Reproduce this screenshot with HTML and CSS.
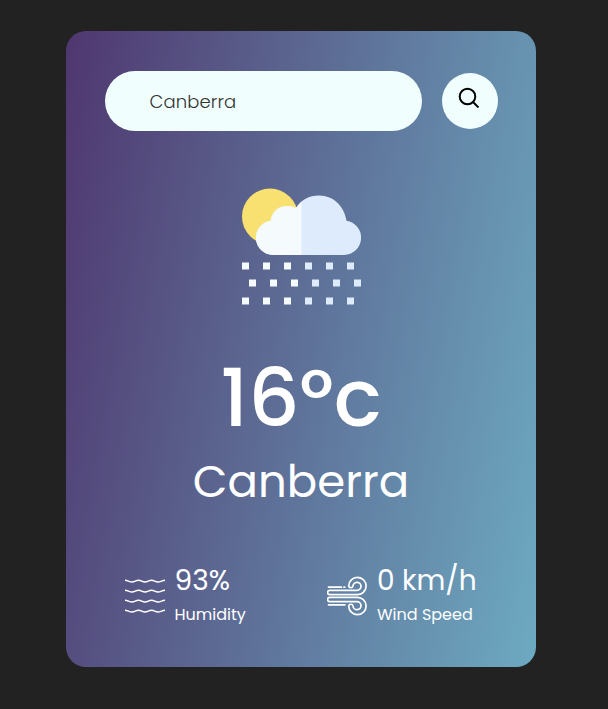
FILE: index.html
```html
<!DOCTYPE html>
<html lang="en">
<head>
<meta charset="utf-8">
<title>Weather</title>
<link rel="stylesheet" href="styles.css">
</head>
<body>
<main class="card">
  <form class="search">
    <div class="field"><span class="query">Canberra</span></div>
    <button class="go" type="button" aria-label="Search">
      <svg width="22" height="22" viewBox="0 0 22 22" fill="none" stroke="#000" stroke-width="2"><circle cx="9.500" cy="9.500" r="7.800"/><path d="M15 15l5.500 5.500"/></svg>
    </button>
  </form>
  <svg class="picture" width="120" height="120" viewBox="0 0 120 120">
    <circle cx="29" cy="29.500" r="28" fill="#f9e171"/>
    <path d="M32 68A17.200 17.200 0 0 1 29.500 33.800C31.500 23 39 19 46.500 19Q51 19 55 21C60 13 68 8.500 78 8.500C93 8.500 103.500 20 105.500 33.800A17.200 17.200 0 0 1 103 68Z" fill="#deebfd"/>
    <path d="M32 68A17.200 17.200 0 0 1 29.500 33.800C31.500 23 39 19 46.500 19Q51 19 55 21Q57.500 17.500 60.500 14.500V68Z" fill="#f5fafd"/>
    <path fill="#f5fafd" d="M1 75.500h7v7h-7zM22 75.500h7v7h-7zM43 75.500h7v7h-7zM8 92.500h7v7h-7zM29 92.500h7v7h-7zM50 92.500h7v7h-7zM1 110.500h7v7h-7zM22 110.500h7v7h-7zM43 110.500h7v7h-7z"/>
    <path fill="#deebfd" d="M64 75.500h7v7h-7zM85 75.500h7v7h-7zM106 75.500h7v7h-7zM71 92.500h7v7h-7zM92 92.500h7v7h-7zM113 92.500h7v7h-7zM64 110.500h7v7h-7zM85 110.500h7v7h-7zM106 110.500h7v7h-7z"/>
  </svg>
  <h1 class="temp">16°c</h1>
  <h2 class="city">Canberra</h2>
  <div class="details">
    <div class="detail">
      <svg class="icon" width="40" height="40" viewBox="0 0 40 40" fill="none" stroke="#fff" stroke-width="1.400"><path id="wave" d="M0 4.200C3 4.200 4 6 7 6S10.500 4.200 13.500 4.200 17 6 20 6 23.500 4.200 26.500 4.200 30 6 33 6 37 4.200 40 4.200"/><use href="#wave" y="10"/><use href="#wave" y="20"/><use href="#wave" y="30"/></svg>
      <div><p class="value">93%</p><p class="label">Humidity</p></div>
    </div>
    <div class="detail wind">
      <svg class="icon" width="40" height="40" viewBox="0 0 40 40" fill="none" stroke="#fff" stroke-width="1.700" stroke-linecap="round"><path d="M1.500 11.200h13M17 11.200h.8M29.500 18.700H2.800a2.200 2.200 0 0 1 0-4.400H30a4 4 0 1 0-4-4.300 2.200 2.200 0 0 1-4.300 0A8.700 8.700 0 1 1 30 18.700"/><path d="M1.500 28.800H18M30 21.300H2.800a2.200 2.200 0 0 0 0 4.400H30a4 4 0 1 1-4 4.300 2.200 2.200 0 0 0-4.300 0A8.700 8.700 0 1 0 30 21.300"/></svg>
      <div><p class="value">0 km/h</p><p class="label">Wind Speed</p></div>
    </div>
  </div>
</main>
</body>
</html>
```
FILE: styles.css
```css
* { box-sizing: border-box; margin: 0; padding: 0; }
body {
  min-height: 709px;
  padding: 31px 72px 42px 66px;
  background: #222;
  font-family: Poppins, Inter, sans-serif;
}
.card {
  width: 470px;
  height: 636px;
  padding: 40px 39px 0;
  border-radius: 20px;
  background: linear-gradient(100deg, #4f376f, #6daac1);
  color: #fff;
  display: flex;
  flex-direction: column;
  align-items: center;
}
.search { width: 393px; align-self: flex-start; display: flex; align-items: center; justify-content: space-between; }
.field {
  width: 317px;
  height: 60px;
  padding-left: 44.5px;
  border-radius: 30px;
  background: #f0fffd;
  display: flex;
  align-items: center;
}
.query { font-size: 18px; font-weight: 300; letter-spacing: 0.1px; color: #333; }
.go {
  width: 56px;
  height: 56px;
  border: 0;
  border-radius: 50%;
  background: #f0fffd;
  display: flex;
  align-items: center;
  justify-content: center;
  padding: 0 2px 6px 0;
}
.picture { margin-top: 56px; overflow: visible; }
.temp { margin-top: 43px; font-size: 80px; line-height: 96px; font-weight: 500; white-space: nowrap; }
.city { margin-top: 2px; font-size: 45px; line-height: 68px; font-weight: 400; }
.details { width: 100%; margin-top: 44px; padding-left: 20px; display: grid; grid-template-columns: 202px 1fr; }
.detail { display: flex; align-items: flex-start; gap: 9.5px; white-space: nowrap; }
.wind { gap: 10px; }
.icon { margin-top: 16px; }
.value { font-size: 28px; line-height: 42px; }
.label { margin-top: 1px; font-size: 16px; line-height: 24px; }
```
